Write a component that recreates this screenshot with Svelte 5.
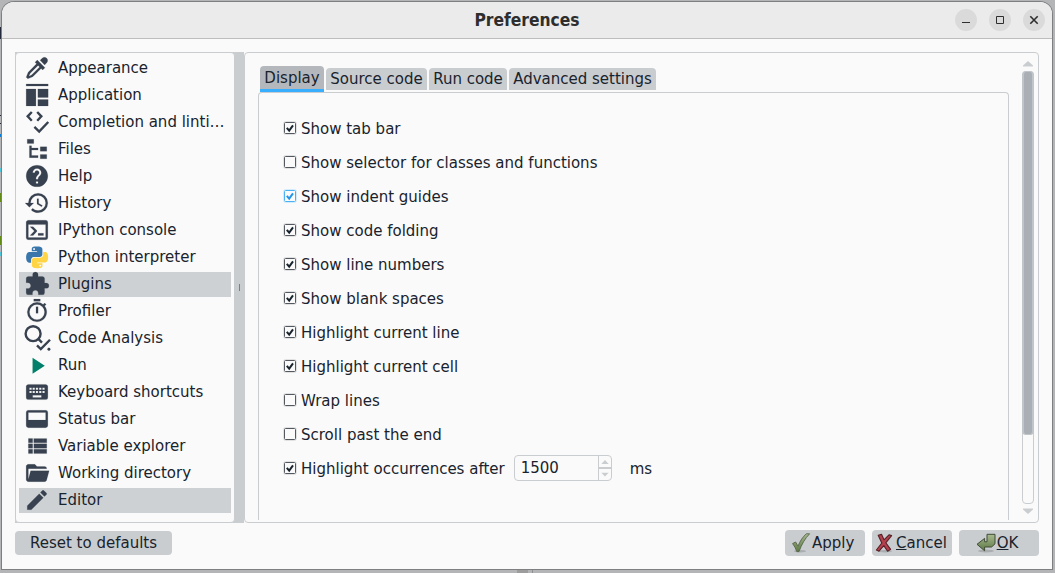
<script>
  const P = {
    eyedropper: 'M19.35,11.72L17.22,13.85L15.81,12.43L8.1,20.14L3.5,22L2,20.5L3.86,15.9L11.57,8.19L10.15,6.78L12.28,4.65L19.35,11.72M16.76,3C17.93,1.83 19.83,1.83 21,3C22.17,4.17 22.17,6.07 21,7.24L19.08,9.16L14.84,4.92L16.76,3M5.56,17.03L4.5,19.5L6.97,18.44L14.4,11L13,9.6L5.56,17.03Z',
    layout: 'M2 1.8H22.3V3.8H2ZM2 6.4H11V22.1H2ZM12.8 6.4H22.3V14.3H12.8ZM12.8 16.2H22.3V22.1H12.8Z',
    tree: 'M3,3H9V7H3V3M15,10H21V14H15V10M15,17H21V21H15V17M13,13H7V18H13V20H5V9H7V11H13V13Z',
    help: 'M15.07,11.25L14.17,12.17C13.45,12.89 13,13.5 13,15H11V14.5C11,13.39 11.45,12.39 12.17,11.67L13.41,10.41C13.78,10.05 14,9.55 14,9C14,7.89 13.1,7 12,7A2,2 0 0,0 10,9H8A4,4 0 0,1 12,5A4,4 0 0,1 16,9C16,9.88 15.64,10.67 15.07,11.25M13,19H11V17H13M12,2A10,10 0 0,0 2,12A10,10 0 0,0 12,22A10,10 0 0,0 22,12C22,6.47 17.5,2 12,2Z',
    history: 'M13.5,8H12V13L16.28,15.54L17,14.33L13.5,12.25V8M13,3A9,9 0 0,0 4,12H1L4.96,16.03L9,12H6A7,7 0 0,1 13,5A7,7 0 0,1 20,12A7,7 0 0,1 13,19C11.07,19 9.32,18.21 8.06,16.94L6.64,18.36C8.27,20 10.5,21 13,21A9,9 0 0,0 22,12A9,9 0 0,0 13,3',
    console: 'M20,19V7H4V19H20M20,3A2,2 0 0,1 22,5V19A2,2 0 0,1 20,21H4A2,2 0 0,1 2,19V5C2,3.89 2.9,3 4,3H20M13,17V15H18V17H13M9.58,13L5.57,9H8.4L11.7,12.3C12.09,12.69 12.09,13.33 11.7,13.72L8.42,17H5.59L9.58,13Z',
    puzzle: 'M20.5,11H19V7C19,5.89 18.1,5 17,5H13V3.5A2.5,2.5 0 0,0 10.5,1A2.5,2.5 0 0,0 8,3.5V5H4A2,2 0 0,0 2,7V10.8H3.5C5,10.8 6.2,12 6.2,13.5C6.2,15 5,16.2 3.5,16.2H2V20A2,2 0 0,0 4,22H7.8V20.5C7.8,19 9,17.8 10.5,17.8C12,17.8 13.2,19 13.2,20.5V22H17A2,2 0 0,0 19,20V16H20.5A2.5,2.5 0 0,0 23,13.5A2.5,2.5 0 0,0 20.5,11Z',
    timer: 'M12,20A7,7 0 0,1 5,13A7,7 0 0,1 12,6A7,7 0 0,1 19,13A7,7 0 0,1 12,20M19.03,7.39L20.45,5.97C20,5.46 19.55,5 19.04,4.56L17.62,6C16.07,4.74 14.12,4 12,4A9,9 0 0,0 3,13A9,9 0 0,0 12,22C17,22 21,17.97 21,13C21,10.88 20.26,8.93 19.03,7.39M11,14H13V8H11M15,1H9V3H15V1Z',
    keyboard: 'M19,10H17V8H19M19,13H17V11H19M16,10H14V8H16M16,13H14V11H16M16,17H8V15H16M7,10H5V8H7M7,13H5V11H7M8,11H10V13H8M8,8H10V10H8M11,11H13V13H11M11,8H13V10H11M20,5H4C2.89,5 2,5.89 2,7V17A2,2 0 0,0 4,19H20A2,2 0 0,0 22,17V7C22,5.89 21.1,5 20,5Z',
    dock: 'M20,4H4A2,2 0 0,0 2,6V18A2,2 0 0,0 4,20H20A2,2 0 0,0 22,18V6A2,2 0 0,0 20,4M20,13H4V6H20V13Z',
    list: 'M9,5V9H21V5M9,19H21V15H9M9,14H21V10H9M4,9H8V5H4M4,19H8V15H4M4,14H8V10H4V14Z',
    folder: 'M19,20H4C2.89,20 2,19.1 2,18V6C2,4.89 2.89,4 4,4H10L12,6H19A2,2 0 0,1 21,8L4,8V18L6.14,10H23.21L20.93,18.5C20.7,19.37 19.92,20 19,20Z',
    pencil: 'M20.71,7.04C21.1,6.65 21.1,6 20.71,5.63L18.37,3.29C18,2.9 17.35,2.9 16.96,3.29L15.12,5.12L18.87,8.87M3,17.25V21H6.75L17.81,9.93L14.06,6.18L3,17.25Z'
  };
  const items = [
    ['Appearance', 'eyedropper'], ['Application', 'layout'], ['Completion and linti…', 'completion'],
    ['Files', 'tree'], ['Help', 'help'], ['History', 'history'], ['IPython console', 'console'],
    ['Python interpreter', 'python'], ['Plugins', 'puzzle'], ['Profiler', 'timer'],
    ['Code Analysis', 'analysis'], ['Run', 'run'], ['Keyboard shortcuts', 'keyboard'],
    ['Status bar', 'dock'], ['Variable explorer', 'list'], ['Working directory', 'folder'], ['Editor', 'pencil']
  ];
  const tabs = [['Display', 64], ['Source code', 101], ['Run code', 78], ['Advanced settings', 147]];
  const options = [
    ['Show tab bar', true], ['Show selector for classes and functions', false],
    ['Show indent guides', true, true], ['Show code folding', true], ['Show line numbers', true],
    ['Show blank spaces', true], ['Highlight current line', true], ['Highlight current cell', true],
    ['Wrap lines', false], ['Scroll past the end', false], ['Highlight occurrences after', true]
  ];
</script>

<div class="desktop">
  <div class="window">
    <header>
      <h1>Preferences</h1>
      <div class="controls">
        <span><svg viewBox="0 0 22 22"><path d="M7 13.5H15" /></svg></span>
        <span><svg viewBox="0 0 22 22"><path d="M7.5 7.5H14.5V14.5H7.5Z" /></svg></span>
        <span><svg viewBox="0 0 22 22"><path d="M7.3 7.3L14.7 14.7M14.7 7.3L7.3 14.7" stroke-width="1.6" /></svg></span>
      </div>
    </header>

    <main>
      <div class="side">
        <nav>
          {#each items as [label, icon]}
            <div class="item" class:selected={label === 'Plugins' || label === 'Editor'}>
              <svg class="icon" viewBox="0 0 24 24">
                {#if icon === 'completion'}
                  <path class="line" d="M7.2 2.8L3.4 6.8L7.2 10.8M12.2 2.8L16 6.8L12.2 10.8M9.6 16.6L14 20.8L22.4 12" />
                {:else if icon === 'python'}
                  <g transform="translate(2 2.2) scale(.84)">
                    <path fill="#3876ab" d="M14.25.18l.9.2.73.26.59.3.45.32.34.34.25.34.16.33.1.3.04.26.02.2-.01.13V8.5l-.05.63-.13.55-.21.46-.26.38-.3.31-.33.25-.35.19-.35.14-.33.1-.3.07-.26.04-.21.02H8.77l-.69.05-.59.14-.5.22-.41.27-.33.32-.27.35-.2.36-.15.37-.1.35-.07.32-.04.27-.02.21v3.06H3.17l-.21-.03-.28-.07-.32-.12-.35-.18-.36-.26-.36-.36-.35-.46-.32-.59-.28-.73-.21-.88-.14-1.05-.05-1.23.06-1.22.16-1.04.24-.87.32-.71.36-.57.4-.44.42-.33.42-.24.4-.16.36-.1.32-.05.24-.01h.16l.06.01h8.16v-.83H6.18l-.01-2.75-.02-.37.05-.34.11-.31.17-.28.25-.26.31-.23.38-.2.44-.18.51-.15.58-.12.64-.1.71-.06.77-.04.84-.02 1.27.05zm-6.3 1.98l-.23.33-.08.41.08.41.23.34.33.22.41.09.41-.09.33-.22.23-.34.08-.41-.08-.41-.23-.33-.33-.22-.41-.09-.41.09z" />
                    <path fill="#ffd545" d="M21.1 6.11l.28.06.32.12.35.18.36.27.36.35.35.47.32.59.28.73.21.88.14 1.04.05 1.23-.06 1.23-.16 1.04-.24.86-.32.71-.36.57-.4.45-.42.33-.42.24-.4.16-.36.09-.32.05-.24.02-.16-.01h-8.22v.82h5.84l.01 2.76.02.36-.05.34-.11.31-.17.29-.25.25-.31.24-.38.2-.44.17-.51.15-.58.13-.64.09-.71.07-.77.04-.84.01-1.27-.04-1.07-.14-.9-.2-.73-.25-.59-.3-.45-.33-.34-.34-.25-.34-.16-.33-.1-.3-.04-.25-.02-.2.01-.13v-5.34l.05-.64.13-.54.21-.46.26-.38.3-.32.33-.24.35-.2.35-.14.33-.1.3-.06.26-.04.21-.02.13-.01h5.84l.69-.05.59-.14.5-.21.41-.28.33-.32.27-.35.2-.36.15-.36.1-.35.07-.32.04-.28.02-.21V6.07h2.09l.14.01zm-6.47 14.25l-.23.33-.08.41.08.41.23.33.33.23.41.08.41-.08.33-.23.23-.33.08-.41-.08-.41-.23-.33-.33-.23-.41-.08-.41.08z" />
                  </g>
                {:else if icon === 'analysis'}
                  <circle class="line" cx="8.4" cy="8" r="6.9" />
                  <path class="line" d="M13.2 12.8L16.6 16.2M12 18.8L15.5 22.2L24 13.6" />
                  <circle cx="23" cy="22.4" r="1.3" />
                {:else if icon === 'run'}
                  <path fill="#00806a" d="M7.9 5.2L19.2 12.6L7.9 20Z" />
                {:else}
                  <path fill-rule="evenodd" d={P[icon]} />
                {/if}
              </svg>
              <span>{label}</span>
            </div>
          {/each}
        </nav>
        <div class="splitter"><i></i></div>
      </div>

      <section class="panel">
        <div class="page">
          <div class="tabs">
            {#each tabs as [label, w], i}
              <div class="tab" class:active={i === 0} style="width:{w}px">{label}</div>
            {/each}
          </div>
          <div class="content">
            {#each options as [label, on, hover], i}
              <div class="option">
                <svg class="check" class:hover viewBox="0 0 14 14">
                  <rect class="halo" x=".5" y=".5" width="13" height="13" rx="2" />
                  <rect class="box" x="1.5" y="1.5" width="11" height="11" rx="1" />
                  {#if on}<path d="M3.8 6.8L6.2 9.6L10 4.4" />{/if}
                </svg>
                <span class="label">{label}</span>
                {#if i === 10}
                  <div class="spin">
                    <span>1500</span>
                    <div class="arrows">
                      <svg viewBox="0 0 12 12"><path d="M2 8.6L6 4.4L10 8.6Z" /></svg>
                      <svg viewBox="0 0 12 12"><path d="M2 4L6 8.2L10 4Z" /></svg>
                    </div>
                  </div>
                  <span class="label">ms</span>
                {/if}
              </div>
            {/each}
          </div>
        </div>
        <div class="scroll">
          <svg viewBox="0 0 12 6"><path d="M1 5.6V4.6L6 0L11 4.6V5.6Z" /></svg>
          <div class="track"><div class="thumb"></div></div>
          <svg viewBox="0 0 12 6"><path d="M1 .4V1.4L6 6L11 1.4V.4Z" /></svg>
        </div>
      </section>
    </main>

    <footer>
      <button class="reset">Reset to defaults</button>
      <button class="act apply">
        <svg viewBox="0 0 20 20">
          <defs><linearGradient id="g" x1="0" y1="0" x2="0" y2="1"><stop offset="0" stop-color="#a9ba8f" /><stop offset="1" stop-color="#5c7844" /></linearGradient></defs>
          <ellipse cx="8" cy="18.2" rx="6" ry="1.3" fill="#a9adaf" />
          <path d="M.6 10.6L3.6 9L6 13.2C8 8 11 3.6 14.4 .8H17.6C13 5.4 9.6 11.4 7 18.6H4.8C3.8 15.6 2.4 12.8 .6 10.6Z" fill="url(#g)" stroke="#55644a" stroke-width=".9" />
        </svg><span>Apply</span>
      </button>
      <button class="act cancel">
        <svg viewBox="0 0 20 20">
          <ellipse cx="10" cy="18.2" rx="7" ry="1.2" fill="#a9adaf" />
          <path d="M3.2 2.2L6.6 1.4L9 6.8L14 1.8L16.6 2.6L10.8 9.8L15.6 16.4L12.6 18.2L8.8 12.6L4 18.2L1.4 17L6.8 10Z" fill="#b5404e" stroke="#552127" stroke-width="1.1" stroke-linejoin="round" />
        </svg><span><u>C</u>ancel</span>
      </button>
      <button class="act ok">
        <svg viewBox="0 0 20 20">
          <ellipse cx="10" cy="18" rx="8" ry="1.4" fill="#a9adaf" />
          <path d="M11 1.3H19V10.8L15.6 14H8.6V17.8L1 11.3L8.6 5.4V8.8H11Z" fill="url(#g)" stroke="#3f4b36" stroke-width="1" stroke-linejoin="round" />
        </svg><span><u>O</u>K</span>
      </button>
    </footer>
  </div>
</div>

<style>
  :global(body) { margin: 0; overflow: hidden; }
  * { box-sizing: border-box; }
  .desktop {
    width: 1055px; height: 573px; padding: 2px 3px 4px 2px; overflow: hidden;
    font: 15px/20px "DejaVu Sans", sans-serif; color: #19232d;
    background:
      linear-gradient(#8d8f91, #8d8f91) 532px 569px / 1px 4px no-repeat,
      linear-gradient(#9d9d9d, #9d9d9d) 517px 569px / 11px 4px no-repeat,
      linear-gradient(#222a3c, #222a3c) 0 27px / 2px 12px no-repeat,
      linear-gradient(#222a3c, #222a3c) 0 115px / 2px 1px no-repeat,
      linear-gradient(#222a3c, #222a3c) 0 123px / 2px 1px no-repeat,
      linear-gradient(#0c7cd5, #0c7cd5) 0 134px / 2px 3px no-repeat,
      linear-gradient(#4cc6d8, #4cc6d8) 0 168px / 2px 4px no-repeat,
      linear-gradient(#628c16, #628c16) 0 193px / 2px 9px no-repeat,
      linear-gradient(#628c16, #628c16) 0 236px / 2px 9px no-repeat,
      linear-gradient(#4cc6d8, #4cc6d8) 0 252px / 2px 4px no-repeat,
      #b4b5b6;
  }
  .window {
    height: 567px; width: 1050px; background: #fafafa; border-radius: 12px 12px 0 0;
    box-shadow: 0 0 0 1px #7d7f80; display: flex; flex-direction: column;
  }
  header {
    height: 37px; flex: none; background: #ebebeb; border-bottom: 1px solid #bdbdbd; border-radius: 12px 12px 0 0;
    display: grid; grid-template-columns: 1fr auto 1fr; align-items: center;
  }
  h1 { grid-column: 2; margin: 0; font: 700 17.3px/22px "DejaVu Sans Condensed", "DejaVu Sans", sans-serif; font-stretch: condensed; color: #2e2e2e; }
  .controls { display: flex; gap: 12px; justify-self: end; padding-right: 7px; }
  .controls span { width: 22px; height: 22px; border-radius: 50%; background: #dadada; }
  .controls svg { display: block; width: 22px; height: 22px; fill: none; stroke: #2e2e2e; }
  main { display: flex; padding: 13px 13px 0; height: 484px; flex: none; }
  .side { display: flex; width: 229px; height: 471px; background: #c9cdd0; flex: none; }
  nav {
    width: 220px; height: 471px; background: #fafafa; border: 1px solid #c9cdd0; border-radius: 4px;
    padding: 3px 3px 0 3px; display: flex; flex-direction: column; gap: 2px;
  }
  .item { height: 25px; flex: none; display: flex; align-items: center; padding: 0 6px 0 5px; }
  .item.selected { background: #ced1d4; }
  .item span { margin-left: 8px; padding-bottom: 1px; white-space: nowrap; }
  .icon { width: 26px; height: 26px; margin-top: -1px; flex: none; fill: #37414f; stroke: #37414f; stroke-width: .15; overflow: visible; }
  .icon .line { fill: none; stroke-width: 2.2; }
  .icon g, .icon [fill="#00806a"] { stroke: none; }
  .splitter { width: 9px; display: grid; place-items: center; }
  .splitter i { width: 1px; height: 7px; background: #788089; }
  .panel {
    width: 795px; height: 471px; border: 1px solid #c9cdd0; border-radius: 4px; background: #fafafa;
    display: flex; justify-content: space-between; padding: 8px 4px 0 13px;
  }
  .page { width: 751px; display: flex; flex-direction: column; padding-top: 5px; }
  .tabs { display: flex; align-items: flex-start; gap: 2px; height: 26px; padding-left: 2px; flex: none; }
  .tab { height: 22px; margin-top: 2px; background: #c9cdd0; border-radius: 4px 4px 0 0; text-align: center; line-height: 23px; white-space: nowrap; }
  .tab.active { height: 26px; margin-top: 0; background: #b4b8bc; border-bottom: 3px solid #37aefe; line-height: 25px; }
  .content {
    height: 428px; border: 1px solid #c9cdd0; border-bottom: 0; border-radius: 4px 4px 0 0;
    padding: 18px 24px 0; display: flex; flex-direction: column;
  }
  .option { height: 34px; flex: none; display: flex; align-items: center; }
  .label { padding-top: 2px; }
  .check { width: 14px; height: 14px; margin-right: 4px; fill: none; }
  .halo { stroke: #dfe1e3; }
  .box { stroke: #54595f; }
  .check path { stroke: #19232d; stroke-width: 2; }
  .hover .box { stroke: #4bb1f5; }
  .hover .halo { stroke: #d3ecfc; }
  .check.hover path { stroke: #2196e8; }
  .spin {
    width: 98px; height: 26px; border: 1px solid #c9cdd0; border-radius: 4px; margin: 0 18px 0 9px;
    display: flex; justify-content: space-between; padding-left: 6px; line-height: 25px;
  }
  .arrows { width: 13px; border-left: 1px solid #c9cdd0; display: flex; flex-direction: column; }
  .arrows svg { width: 12px; height: 11px; fill: #c9cdd0; }
  .arrows svg:first-child { height: 13px; border-bottom: 2px solid #c9cdd0; }
  .scroll { width: 12px; display: flex; flex-direction: column; align-items: center; }
  .scroll svg { width: 12px; height: 6px; fill: #c9cdd0; flex: none; }
  .track { width: 12px; height: 433px; margin: 4px 0; border: 1px solid #c9cdd0; border-radius: 4px; }
  .thumb { margin: -1px; width: 12px; height: 364px; background: #a9afb4; border: 2px solid #c0c5c9; border-width: 1px 2px; border-radius: 4px; }
  footer { display: flex; align-items: flex-start; padding: 7px 13px 0; gap: 7px; }
  button {
    font: inherit; color: inherit; border: 0; background: #c9cdd0; border-radius: 4px; padding: 0; height: 24px;
    display: flex; align-items: center; justify-content: center;
  }
  .reset { width: 157px; margin: 1px auto 0 0; }
  .act { width: 80px; height: 26px; padding-bottom: 1px; }
  .act svg { width: 20px; height: 20px; }
  .apply, .cancel { justify-content: flex-start; }
  .apply { padding-left: 7px; }
  .cancel { padding-left: 3px; }
  .cancel span { margin-left: 1px; }
  .ok { padding-right: 4px; }
  .ok svg { margin-right: 1px; }
</style>
